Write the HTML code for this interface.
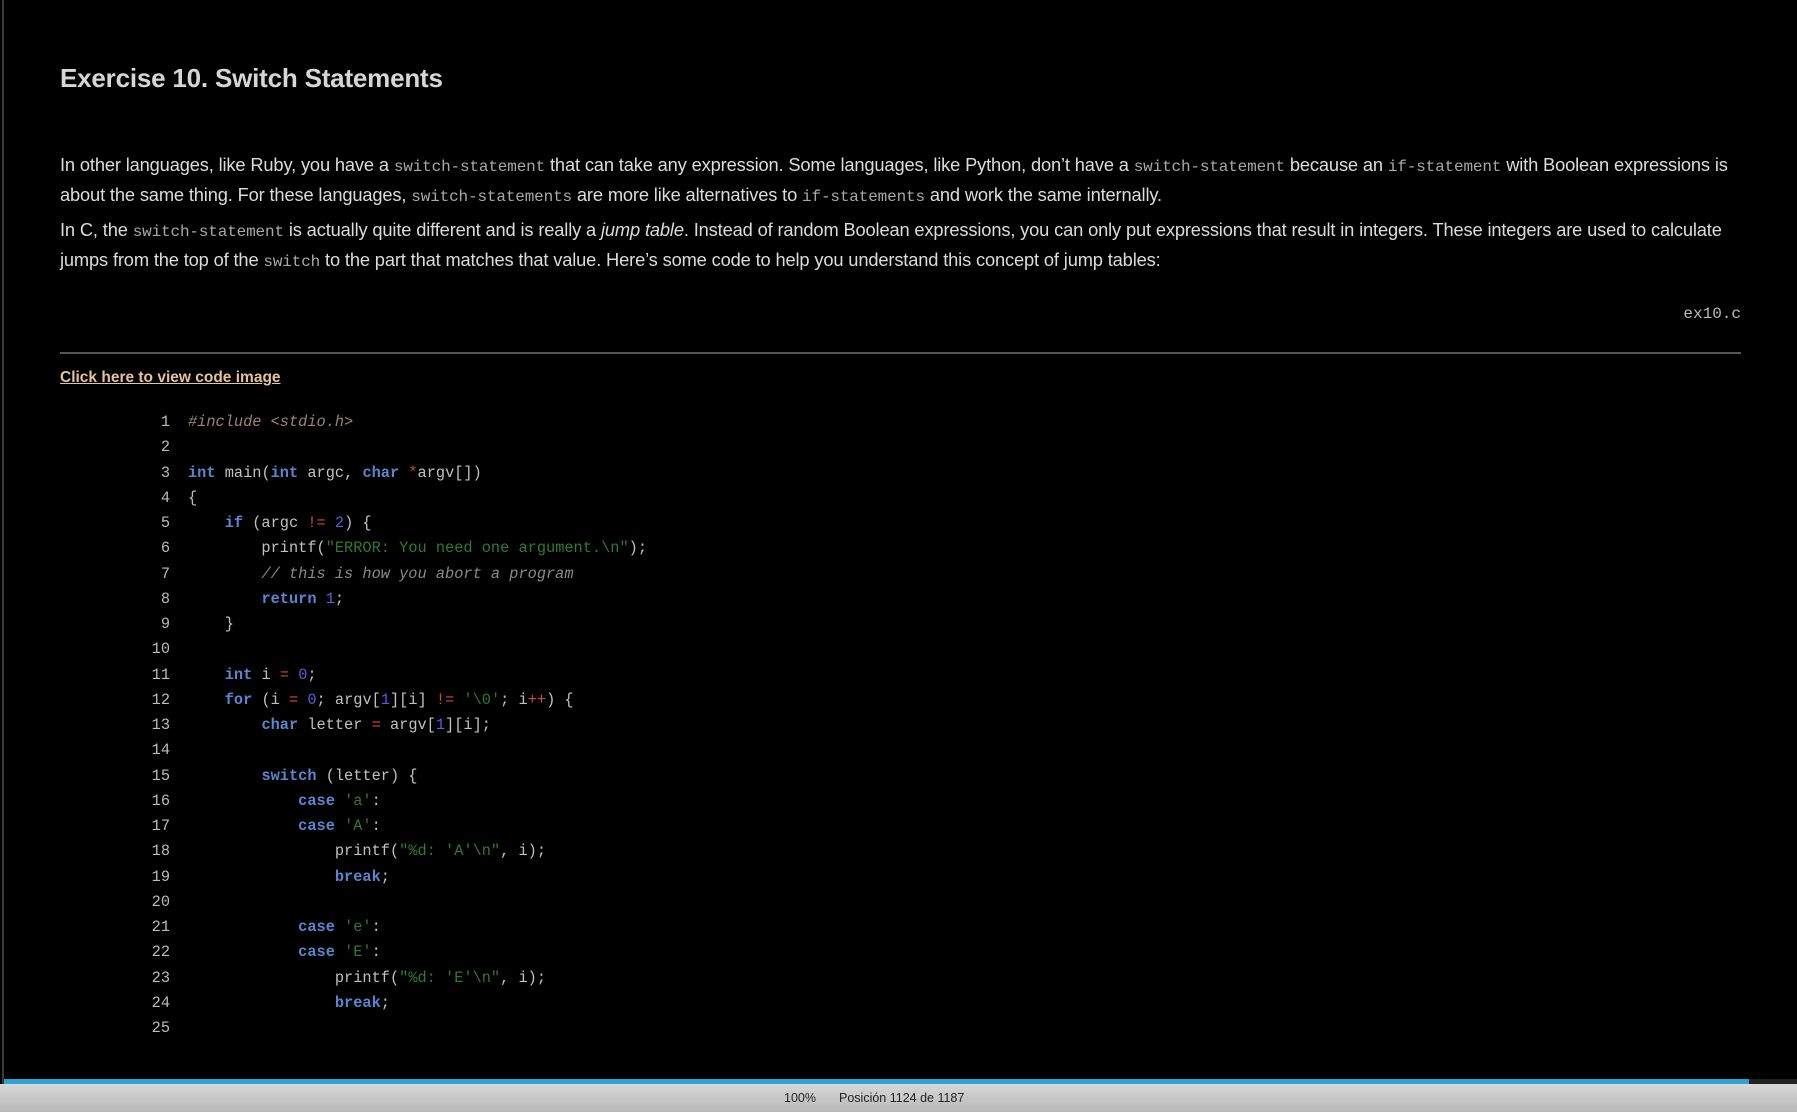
<!DOCTYPE html>
<html><head><meta charset="utf-8"><style>
html,body{margin:0;padding:0;background:#000;width:1797px;height:1112px;overflow:hidden;}
body{position:relative;font-family:"Liberation Sans",sans-serif;color:#d8d8d8;}
.lb{position:absolute;left:2px;top:0;width:2px;height:1084px;background:#3a3a3a;}
h1{position:absolute;left:60px;top:60px;margin:0;font-size:26px;font-weight:bold;color:#d6d6d6;line-height:36px;letter-spacing:-0.2px;}
.ln{position:absolute;left:60px;white-space:nowrap;font-size:18.3px;line-height:24px;color:#dcdcdc;letter-spacing:-0.15px;}
code{font-family:"Liberation Mono",monospace;font-size:16px;color:#a8a8a8;}
.fn{position:absolute;right:56px;top:305px;font-family:"Liberation Mono",monospace;font-size:16px;color:#bbb;}
.hr{position:absolute;left:60px;width:1681px;top:352px;height:2px;background:#555;}
.lk{position:absolute;left:60px;top:369px;font-size:15.5px;font-weight:bold;color:#e6c39a;text-decoration:underline;}
pre{position:absolute;left:0;top:410px;margin:0;font-family:"Liberation Mono",monospace;font-size:15.3px;line-height:25.25px;color:#c0c0c0;}
.n{display:inline-block;width:170px;text-align:right;margin-right:18px;color:#bbb;}
.k{color:#5a86d0;font-weight:bold}.o{color:#d8482e}.d{color:#5c5ce0}.s{color:#2f7a32}.c{color:#8a8a8a;font-style:italic}.p{color:#9a8478;font-style:italic}
.pb{position:absolute;left:4px;top:1079px;width:1745px;height:5px;background:#2ba3d6;}
.pbr{position:absolute;left:1749px;top:1079px;width:48px;height:5px;background:#222;}
.sb{position:absolute;left:0;top:1084px;width:1797px;height:28px;background:linear-gradient(#d8d8d8,#b8b8b8);font-size:12.5px;color:#222;}
.sb span{position:absolute;top:7px;}
</style></head><body>
<div class="lb"></div>
<h1>Exercise 10. Switch Statements</h1>
<div class="ln" style="top:153px">In other languages, like Ruby, you have a <code>switch-statement</code> that can take any expression. Some languages, like Python, don’t have a <code>switch-statement</code> because an <code>if-statement</code> with Boolean expressions is</div>
<div class="ln" style="top:183px">about the same thing. For these languages, <code>switch-statements</code> are more like alternatives to <code>if-statements</code> and work the same internally.</div>
<div class="ln" style="top:218px">In C, the <code>switch-statement</code> is actually quite different and is really a <i>jump table</i>. Instead of random Boolean expressions, you can only put expressions that result in integers. These integers are used to calculate</div>
<div class="ln" style="top:248px">jumps from the top of the <code>switch</code> to the part that matches that value. Here’s some code to help you understand this concept of jump tables:</div>
<div class="fn">ex10.c</div>
<div class="hr"></div>
<div class="lk">Click here to view code image</div>
<pre><span class="n">1</span><span class="p">#include &lt;stdio.h&gt;</span>
<span class="n">2</span>
<span class="n">3</span><span class="k">int</span> main(<span class="k">int</span> argc, <span class="k">char</span> <span class="o">*</span>argv[])
<span class="n">4</span>{
<span class="n">5</span>    <span class="k">if</span> (argc <span class="o">!=</span> <span class="d">2</span>) {
<span class="n">6</span>        printf(<span class="s">"ERROR: You need one argument.\n"</span>);
<span class="n">7</span>        <span class="c">// this is how you abort a program</span>
<span class="n">8</span>        <span class="k">return</span> <span class="d">1</span>;
<span class="n">9</span>    }
<span class="n">10</span>
<span class="n">11</span>    <span class="k">int</span> i <span class="o">=</span> <span class="d">0</span>;
<span class="n">12</span>    <span class="k">for</span> (i <span class="o">=</span> <span class="d">0</span>; argv[<span class="d">1</span>][i] <span class="o">!=</span> <span class="s">'\0'</span>; i<span class="o">++</span>) {
<span class="n">13</span>        <span class="k">char</span> letter <span class="o">=</span> argv[<span class="d">1</span>][i];
<span class="n">14</span>
<span class="n">15</span>        <span class="k">switch</span> (letter) {
<span class="n">16</span>            <span class="k">case</span> <span class="s">'a'</span>:
<span class="n">17</span>            <span class="k">case</span> <span class="s">'A'</span>:
<span class="n">18</span>                printf(<span class="s">"%d: 'A'\n"</span>, i);
<span class="n">19</span>                <span class="k">break</span>;
<span class="n">20</span>
<span class="n">21</span>            <span class="k">case</span> <span class="s">'e'</span>:
<span class="n">22</span>            <span class="k">case</span> <span class="s">'E'</span>:
<span class="n">23</span>                printf(<span class="s">"%d: 'E'\n"</span>, i);
<span class="n">24</span>                <span class="k">break</span>;
<span class="n">25</span></pre>
<div class="pb"></div><div class="pbr"></div>
<div class="sb"><span style="left:784px">100%</span><span style="left:839px">Posición 1124 de 1187</span></div>
</body></html>
